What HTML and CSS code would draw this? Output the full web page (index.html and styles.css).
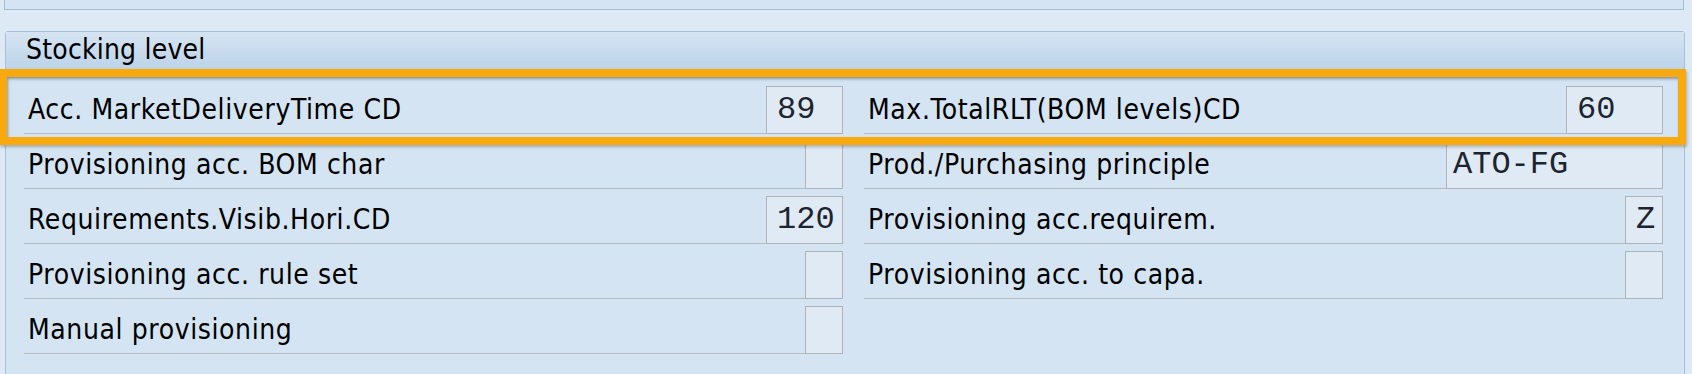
FILE: index.html
```html
<!DOCTYPE html>
<html>
<head>
  <meta charset="UTF-8">
  <title>Stocking level</title>
  <link rel="stylesheet" href="styles.css">
</head>
<body>
  <div class="screen">
    <div class="top-panel"></div>

    <div class="group">
      <div class="group-title">Stocking level</div>
      <div class="group-body">
        <div class="col">
          <div class="row"><span class="label">Acc. MarketDeliveryTime CD</span><span class="field w4">89</span></div>
          <div class="row"><span class="label">Provisioning acc. BOM char</span><span class="field w1"></span></div>
          <div class="row"><span class="label">Requirements.Visib.Hori.CD</span><span class="field w4">120</span></div>
          <div class="row"><span class="label">Provisioning acc. rule set</span><span class="field w1"></span></div>
          <div class="row"><span class="label">Manual provisioning</span><span class="field w1"></span></div>
        </div>
        <div class="col">
          <div class="row"><span class="label">Max.TotalRLT(BOM levels)CD</span><span class="field w5">60</span></div>
          <div class="row"><span class="label">Prod./Purchasing principle</span><span class="field w10">ATO-FG</span></div>
          <div class="row"><span class="label">Provisioning acc.requirem.</span><span class="field w1">Z</span></div>
          <div class="row"><span class="label">Provisioning acc. to capa.</span><span class="field w1"></span></div>
        </div>
      </div>
    </div>

    <!-- highlight drawn over the first row -->
    <div class="highlight"></div>
  </div>
</body>
</html>
```

FILE: styles.css
```css
body {
  margin: 0;
  background: #dde9f5;
  font-family: "DejaVu Sans Condensed", "DejaVu Sans", sans-serif;
  font-stretch: condensed;
  color: #000;
}
.screen {
  position: relative;
  width: 1692px;
  height: 374px;
  overflow: hidden;
}
.top-panel {
  margin-left: 4px;
  width: 1680px;
  height: 10px;
  box-sizing: border-box;
  background: #d5e4f2;
  border: 1px solid #a3bcd8;
  border-top: none;
}
.group {
  margin: 21px 0 0 5px;
  width: 1680px;
  height: 400px;
  box-sizing: border-box;
  background: #d4e4f2;
  border: 1px solid #a7bfdb;
  border-radius: 3px 3px 0 0;
}
.group-title {
  height: 37px;
  padding-left: 20px;
  font-size: 28px;
  letter-spacing: 0.2px;
  line-height: 36px;
  background: linear-gradient(#d6e4f2, #bcd3e9);
}
.group-body {
  display: grid;
  grid-template-columns: 819px 799px;
  column-gap: 21px;
  padding: 17px 0 0 18px;
}
.row {
  display: flex;
  height: 48px;
  margin-bottom: 7px;
}
.label {
  flex: 1;
  padding-left: 4px;
  font-size: 28px;
  letter-spacing: 0.6px;
  line-height: 48px;
  border-bottom: 1px solid #b7bcc2;
  white-space: nowrap;
}
.field {
  box-sizing: border-box;
  height: 48px;
  padding-left: 10px;
  background: #e0eaf4;
  border: 1px solid #b0b3b6;
  font-family: "Liberation Mono", monospace;
  font-size: 32px;
  line-height: 46px;
  color: #1c2430;
}
.w1 { width: 38px; }
.w4 { width: 77px; }
.w5 { width: 97px; }
.w10 { width: 217px; padding-left: 6px; }
.highlight {
  position: absolute;
  top: 69px;
  left: -1px;
  width: 1687px;
  height: 76px;
  box-sizing: border-box;
  border: 8px solid #f7a90d;
  box-shadow: inset 1px 2px 3px rgba(0, 0, 0, 0.35), 1px 2px 3px rgba(0, 0, 0, 0.25);
}
```
